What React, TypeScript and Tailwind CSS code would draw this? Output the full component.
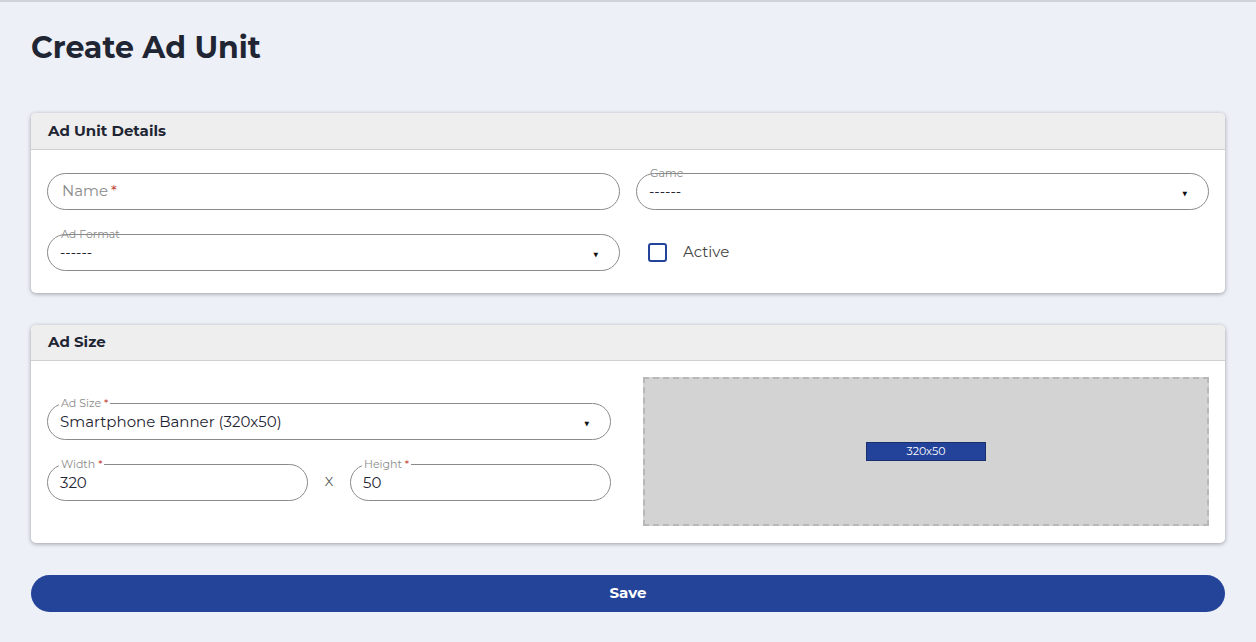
export default function App() {
  const font = { fontFamily: 'Montserrat, "Open Sans", "Noto Sans", sans-serif' };
  const Notch = ({ label, req, bg = true }: { label: string; req?: boolean; bg?: boolean }) => (
    <span className={`absolute left-[11px] top-[-8px] px-[2px] text-[11px] leading-[14px] text-[#8a8a8a] ${bg ? 'bg-white' : ''}`}>
      {label}
      {req && <span className="text-[#c0392b]"> *</span>}
    </span>
  );
  const Arrow = () => <span className="absolute right-[20px] top-[11px] text-[11px] text-[#111]">▼</span>;
  return (
    <div style={font} className="min-h-[642px] bg-[#edf0f7] border-t-2 border-[#cfd3da] px-[31px] text-[#1f2533]">
      <h1 className="pt-[28px] text-[30px] font-bold leading-[36px] text-[#1f2533]">Create Ad Unit</h1>

      <div className="mt-[47px] rounded-[5px] bg-white shadow-[0_1px_4px_rgba(0,0,0,0.35)] overflow-hidden">
        <div className="h-[37px] bg-[#eeeeee] border-b border-[#d0d0d0] px-[17px] flex items-center text-[15px] font-bold">Ad Unit Details</div>
        <div className="px-[16px] pt-[23px] pb-[22px] grid grid-cols-2 gap-x-[16px] gap-y-[24px]">
          <div className="h-[37px] rounded-full border border-[#8a8a8a] flex items-center px-[14px] text-[15px] text-[#8a8a8a]">
            Name<span className="text-[#c0392b] ml-[3px]">*</span>
          </div>
          <div className="relative h-[37px] rounded-full border border-[#8a8a8a] flex items-center px-[12px] pt-[2px] text-[14px]">
            <Notch label="Game" bg={false} />------<Arrow />
          </div>
          <div className="relative h-[37px] rounded-full border border-[#8a8a8a] flex items-center px-[12px] pt-[2px] text-[14px]">
            <Notch label="Ad Format" bg={false} />------<Arrow />
          </div>
          <div className="flex items-center gap-[16px] pl-[12px]">
            <span className="w-[19px] h-[19px] rounded-[3px] border-2 border-[#24449a]" />
            <span className="text-[15px] text-[#444]">Active</span>
          </div>
        </div>
      </div>

      <div className="mt-[32px] rounded-[5px] bg-white shadow-[0_1px_4px_rgba(0,0,0,0.35)] overflow-hidden">
        <div className="h-[36px] bg-[#eeeeee] border-b border-[#d0d0d0] px-[17px] flex items-center text-[15px] font-bold">Ad Size</div>
        <div className="px-[16px] pt-[16px] pb-[17px] flex gap-[32px]">
          <div className="w-[564px] flex flex-col justify-center gap-[24px]">
            <div className="relative h-[37px] rounded-full border border-[#8a8a8a] flex items-center px-[12px] pt-[2px] text-[15px]">
              <Notch label="Ad Size" req />Smartphone Banner (320x50)<Arrow />
            </div>
            <div className="flex items-center">
              <div className="relative flex-1 h-[37px] rounded-full border border-[#8a8a8a] flex items-center px-[12px] pt-[2px] text-[15px]">
                <Notch label="Width" req />320
              </div>
              <span className="w-[42px] text-center text-[13px] text-[#555]">X</span>
              <div className="relative flex-1 h-[37px] rounded-full border border-[#8a8a8a] flex items-center px-[12px] pt-[2px] text-[15px]">
                <Notch label="Height" req />50
              </div>
            </div>
          </div>
          <div className="flex-1 h-[149px] bg-[#d3d3d3] border-2 border-dashed border-[#b8b8b8] flex items-center justify-center">
            <div className="w-[120px] h-[19px] bg-[#23429a] border border-[#1a2f6e] text-white text-[11px] flex items-center justify-center">320x50</div>
          </div>
        </div>
      </div>

      <button className="mt-[32px] w-full h-[37px] rounded-full bg-[#24449a] text-white text-[15px] font-bold">Save</button>
    </div>
  );
}
